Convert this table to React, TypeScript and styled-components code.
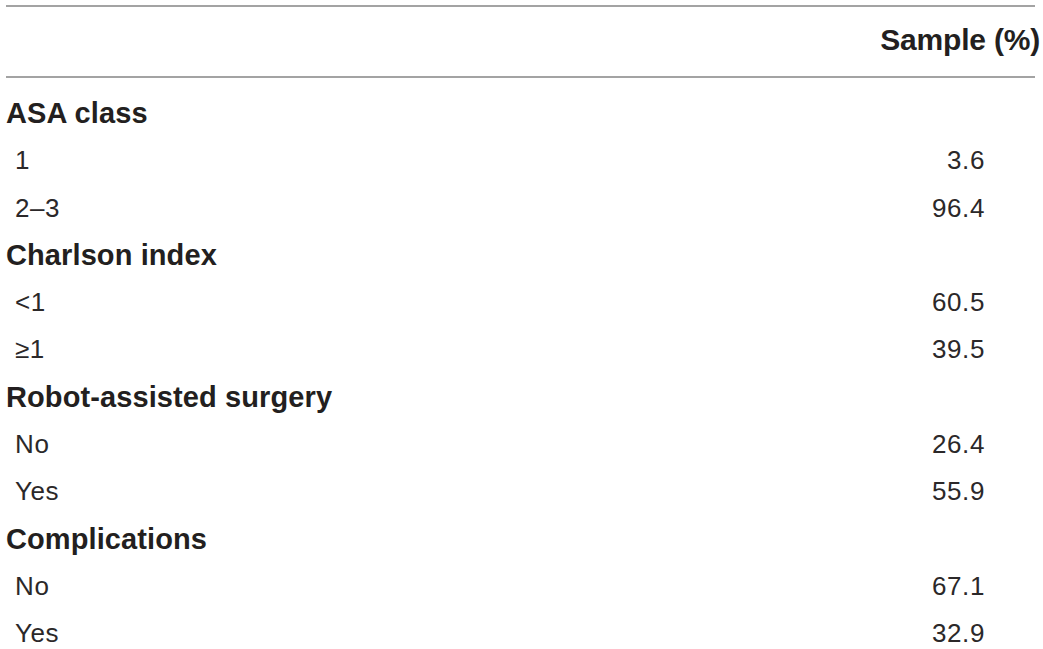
import styled, { createGlobalStyle } from 'styled-components';

const GlobalStyle = createGlobalStyle`
  html, body {
    margin: 0;
    padding: 0;
    background: #ffffff;
  }
  body {
    font-family: 'Liberation Sans', Arial, Helvetica, sans-serif;
    color: #231f20;
  }
`;

const Page = styled.div`
  padding: 5px 0 0 6px;
`;

const Table = styled.div`
  width: 1029px;
  border-top: 2px solid #a3a3a3;
`;

const HeaderRow = styled.div`
  display: flex;
  justify-content: flex-end;
  height: 69px;
  line-height: 66px;
  border-bottom: 2px solid #a3a3a3;
`;

const HeaderCell = styled.span`
  font-size: 30px;
  font-weight: 700;
  letter-spacing: -0.2px;
  margin-right: -5px;
`;

const Body = styled.div`
  padding-top: 12px;
`;

const Row = styled.div<{ $group?: boolean }>`
  display: grid;
  grid-template-columns: 1fr auto;
  height: 47.3px;
  line-height: 47.3px;
  padding-right: 51px;
  font-size: ${(p) => (p.$group ? '29px' : '26px')};
  font-weight: ${(p) => (p.$group ? 700 : 400)};
  letter-spacing: ${(p) => (p.$group ? '0.1px' : '0.6px')};
  color: ${(p) => (p.$group ? '#231f20' : '#2b2829')};
`;

const Label = styled.span<{ $indent?: boolean }>`
  padding-left: ${(p) => (p.$indent ? '9px' : '0')};
`;

const Value = styled.span`
  text-align: right;
  margin-right: -1px;
`;

type Item = { label: string; value?: string; group?: boolean };

const rows: Item[] = [
  { label: 'ASA class', group: true },
  { label: '1', value: '3.6' },
  { label: '2–3', value: '96.4' },
  { label: 'Charlson index', group: true },
  { label: '<1', value: '60.5' },
  { label: '≥1', value: '39.5' },
  { label: 'Robot-assisted surgery', group: true },
  { label: 'No', value: '26.4' },
  { label: 'Yes', value: '55.9' },
  { label: 'Complications', group: true },
  { label: 'No', value: '67.1' },
  { label: 'Yes', value: '32.9' },
];

export default function App() {
  return (
    <>
      <GlobalStyle />
      <Page>
        <Table>
          <HeaderRow>
            <HeaderCell>Sample (%)</HeaderCell>
          </HeaderRow>
          <Body>
            {rows.map((r, i) => (
              <Row key={i} $group={r.group}>
                <Label $indent={!r.group}>{r.label}</Label>
                <Value>{r.value ?? ''}</Value>
              </Row>
            ))}
          </Body>
        </Table>
      </Page>
    </>
  );
}
